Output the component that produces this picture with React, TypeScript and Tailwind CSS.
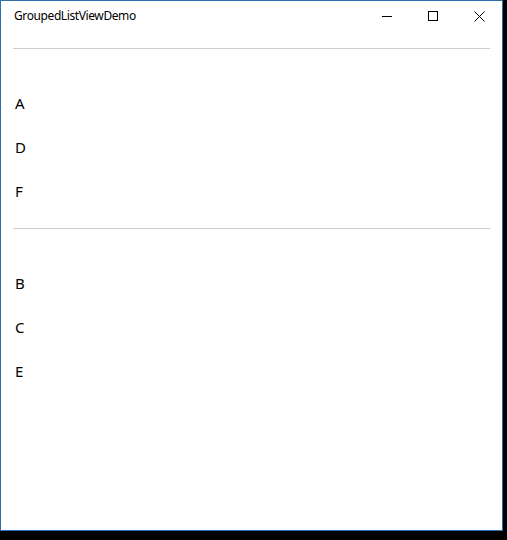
import React from 'react';

const groups: string[][] = [
  ['A', 'D', 'F'],
  ['B', 'C', 'E'],
];

const CaptionButton: React.FC<{ children: React.ReactNode }> = ({ children }) => (
  <div className="flex h-[31px] w-[46px] items-center justify-center">{children}</div>
);

const App: React.FC = () => {
  return (
    <div className="h-[540px] w-[507px] bg-black" style={{ fontFamily: '"Noto Sans", "Open Sans", sans-serif' }}>
      <div className="flex h-[531px] w-[503px] flex-col border border-[#2d6fa8] bg-white">
        {/* title bar */}
        <div className="flex h-[30px] items-center">
          <span className="ml-[13px] flex-1 text-[12px] leading-none tracking-[-0.4px] text-black">
            GroupedListViewDemo
          </span>
          <CaptionButton>
            <svg width="10" height="10" viewBox="0 0 10 10">
              <path d="M0 5.5h10" stroke="#000" strokeWidth="1" />
            </svg>
          </CaptionButton>
          <CaptionButton>
            <svg width="10" height="10" viewBox="0 0 10 10">
              <rect x="0.5" y="0.5" width="9" height="9" fill="none" stroke="#000" strokeWidth="1" />
            </svg>
          </CaptionButton>
          <CaptionButton>
            <svg width="11" height="11" viewBox="0 0 11 11">
              <path d="M0.5 0.5l10 10M10.5 0.5l-10 10" stroke="#000" strokeWidth="1" />
            </svg>
          </CaptionButton>
        </div>

        {/* grouped list */}
        <div className="flex flex-col px-[12px] pt-[17px]">
          {groups.map((items, gi) => (
            <div key={gi} className="flex flex-col pb-[15px]">
              <div className="h-px w-[477px] bg-[#cccccc]" />
              <div className="h-[32px]" />
              {items.map((item) => (
                <div key={item} className="flex h-[44px] items-center pl-[2px] text-[15px] text-black">
                  {item}
                </div>
              ))}
            </div>
          ))}
        </div>
      </div>
    </div>
  );
};

export default App;
